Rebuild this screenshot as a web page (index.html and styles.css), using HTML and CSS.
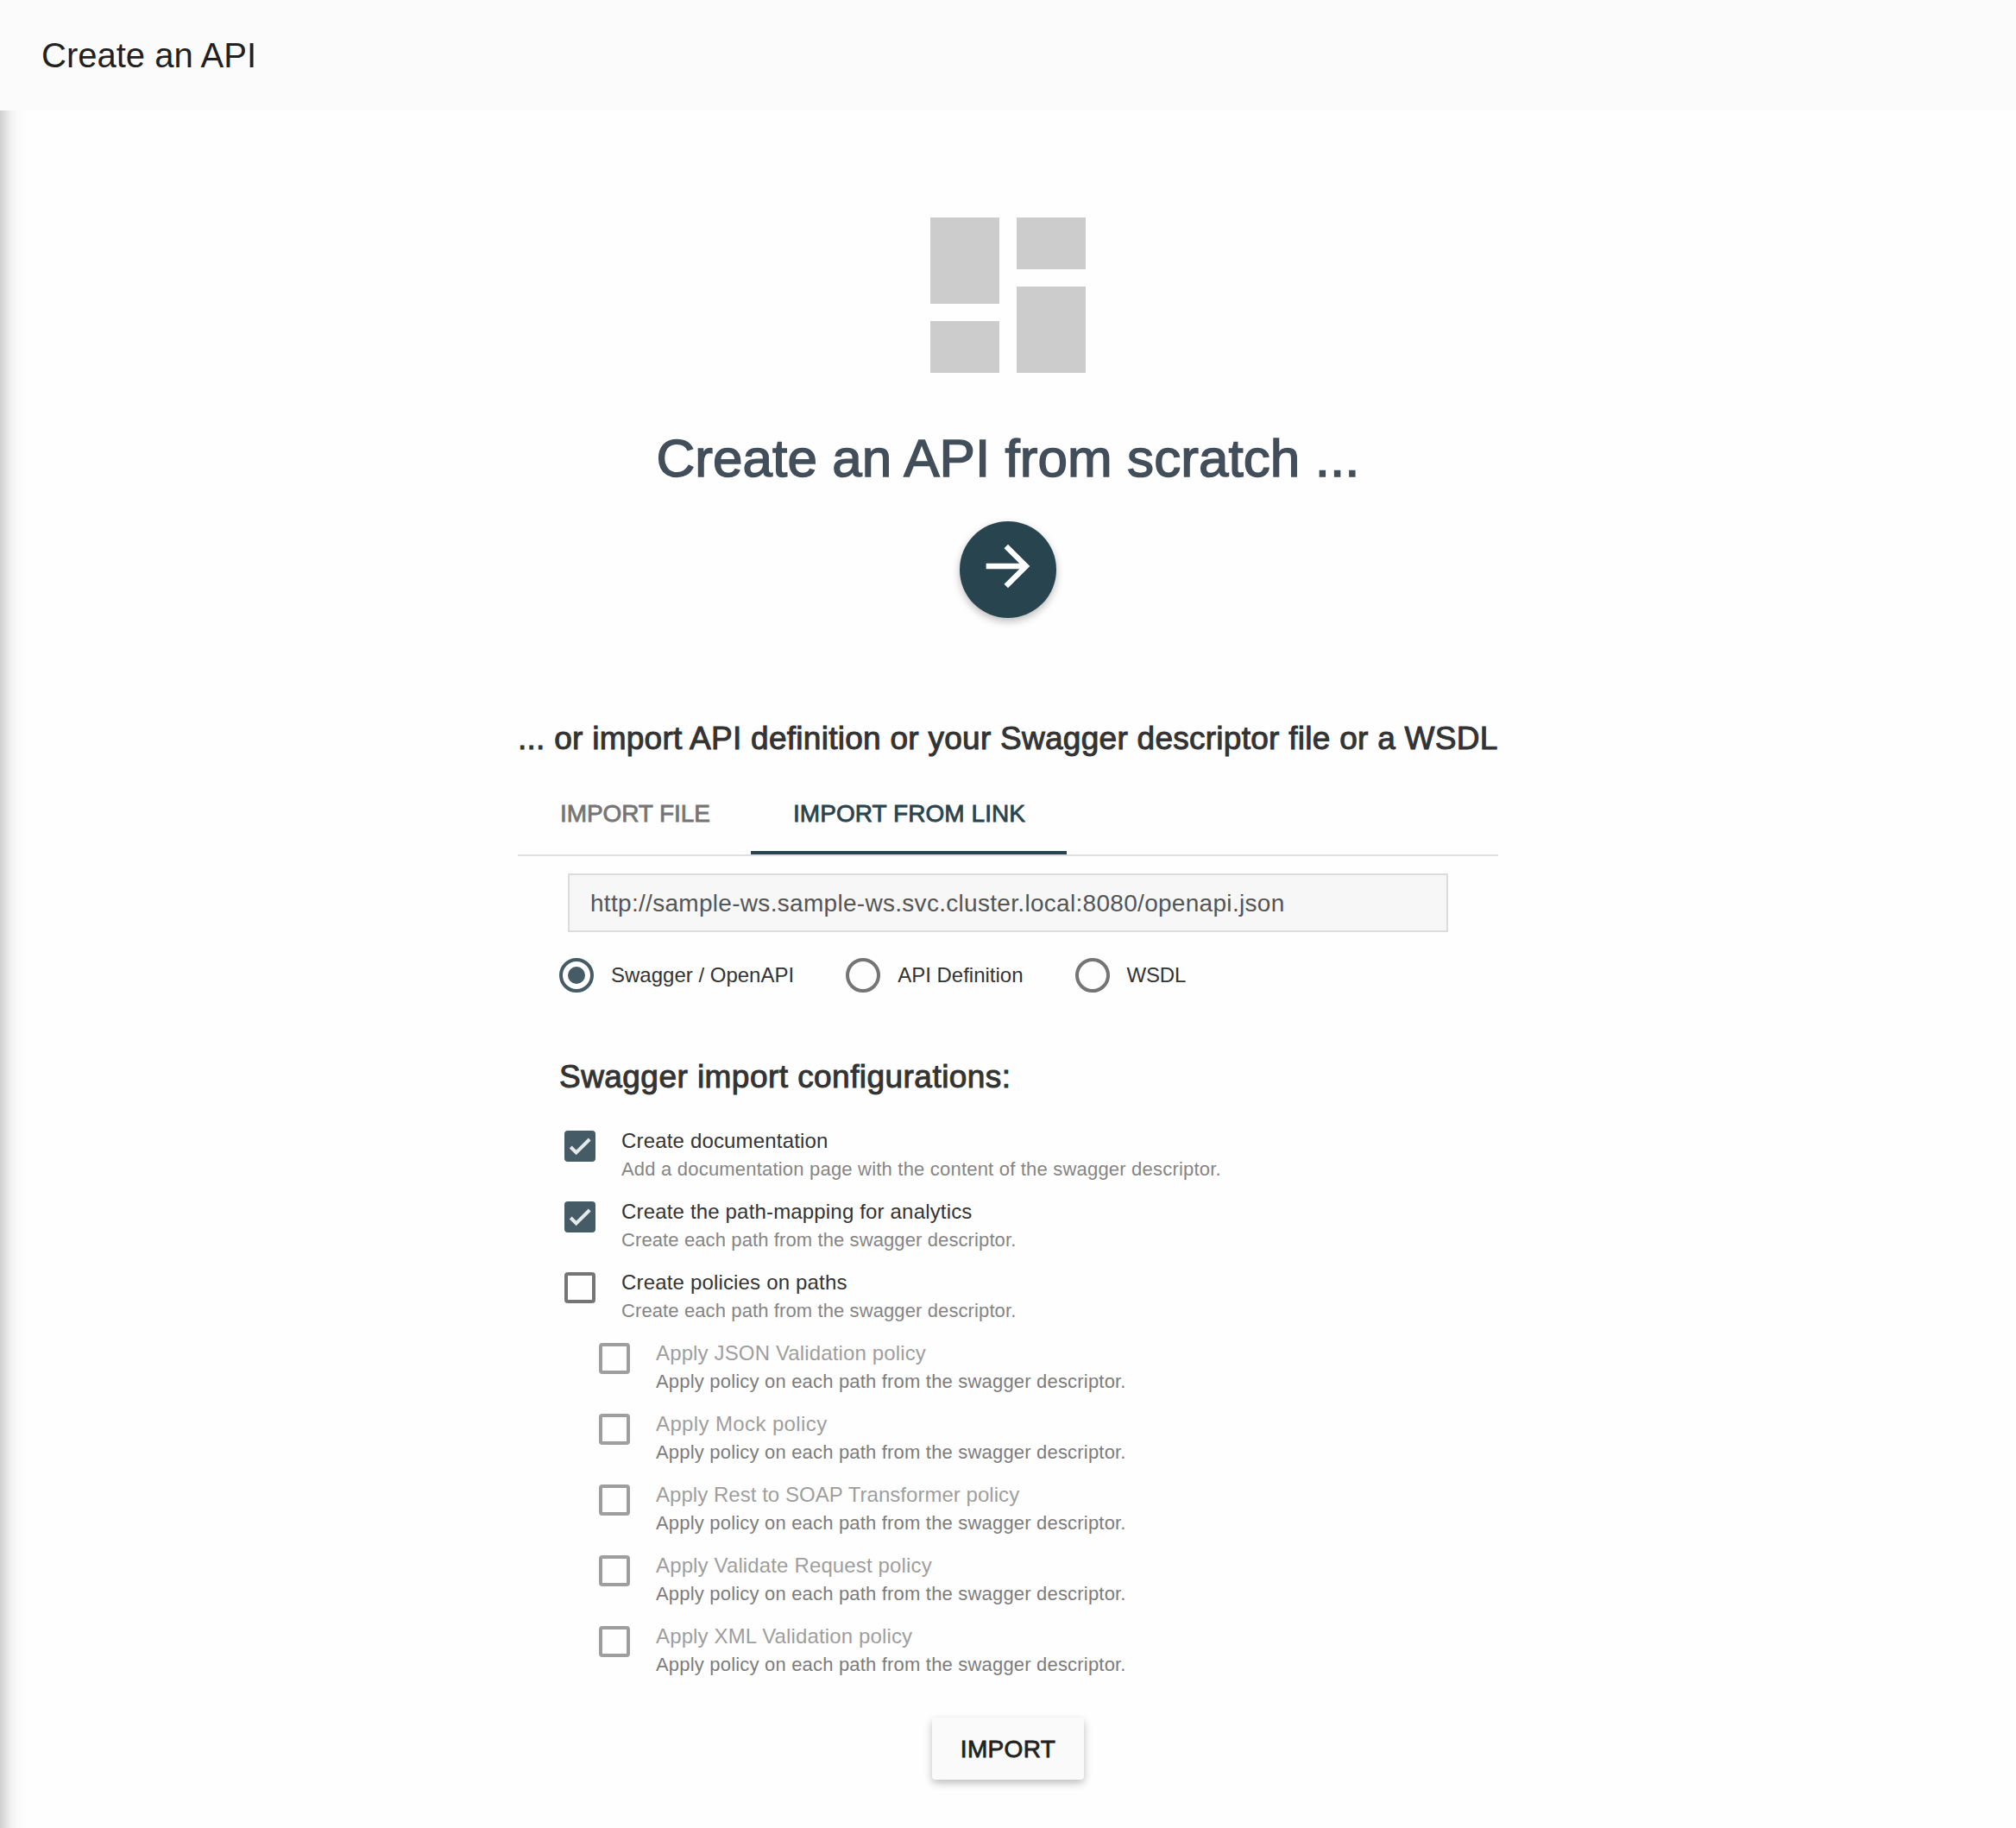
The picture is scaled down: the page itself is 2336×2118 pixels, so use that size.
FILE: index.html
```
<!DOCTYPE html>
<html lang="en">
<head>
<meta charset="utf-8">
<title>Create an API</title>
<link rel="stylesheet" href="styles.css">
</head>
<body>
<header class="toolbar"><h1 class="toolbar-title">Create an API</h1></header>
<main class="content">
  <svg class="dashboard-icon" viewBox="0 0 24 24"><path d="M3 13h8V3H3v10zm0 8h8v-6H3v6zm10 0h8V11h-8v10zm0-18v6h8V3h-8z"/></svg>
  <h2 class="scratch-title">Create an API from scratch ...</h2>
  <button class="fab" aria-label="Create"><svg class="fab-icon" viewBox="0 0 24 24"><path d="M12 4l-1.41 1.41L16.17 11H4v2h12.17l-5.58 5.59L12 20l8-8z"/></svg></button>
  <section class="import">
    <h3 class="import-title">... or import API definition or your Swagger descriptor file or a WSDL</h3>
    <nav class="tabs">
      <div class="tab tab-file">IMPORT FILE</div>
      <div class="tab tab-link active">IMPORT FROM LINK</div>
    </nav>
    <div class="url-field">http://sample-ws.sample-ws.svc.cluster.local:8080/openapi.json</div>
    <div class="radios">
      <div class="radio"><span class="radio-ring checked"></span><span>Swagger / OpenAPI</span></div>
      <div class="radio"><span class="radio-ring"></span><span>API Definition</span></div>
      <div class="radio"><span class="radio-ring"></span><span class="wsdl">WSDL</span></div>
    </div>
    <h3 class="config-title">Swagger import configurations:</h3>
    <div class="options">
      <div class="option"><span class="box checked"><svg class="tick" viewBox="0 0 36 36"><path d="M7.2 19 13.7 25.5 29.2 10"/></svg></span><div><div class="label">Create documentation</div><div class="desc">Add a documentation page with the content of the swagger descriptor.</div></div></div>
      <div class="option"><span class="box checked"><svg class="tick" viewBox="0 0 36 36"><path d="M7.2 19 13.7 25.5 29.2 10"/></svg></span><div><div class="label">Create the path-mapping for analytics</div><div class="desc short">Create each path from the swagger descriptor.</div></div></div>
      <div class="option"><span class="box"></span><div><div class="label">Create policies on paths</div><div class="desc short">Create each path from the swagger descriptor.</div></div></div>
      <div class="option disabled"><span class="box"></span><div><div class="label">Apply JSON Validation policy</div><div class="desc">Apply policy on each path from the swagger descriptor.</div></div></div>
      <div class="option disabled"><span class="box"></span><div><div class="label mock">Apply Mock policy</div><div class="desc">Apply policy on each path from the swagger descriptor.</div></div></div>
      <div class="option disabled"><span class="box"></span><div><div class="label soap">Apply Rest to SOAP Transformer policy</div><div class="desc">Apply policy on each path from the swagger descriptor.</div></div></div>
      <div class="option disabled"><span class="box"></span><div><div class="label">Apply Validate Request policy</div><div class="desc">Apply policy on each path from the swagger descriptor.</div></div></div>
      <div class="option disabled"><span class="box"></span><div><div class="label">Apply XML Validation policy</div><div class="desc">Apply policy on each path from the swagger descriptor.</div></div></div>
    </div>
  </section>
  <button class="import-button">IMPORT</button>
</main>
</body>
</html>
```
FILE: styles.css
```
* { box-sizing: border-box; }
body {
  margin: 0;
  background: #fefefe;
  color: #333;
  font-family: "Liberation Sans", Arial, sans-serif;
}
h1, h2, h3 { margin: 0; font-weight: 400; }
button { padding: 0; border: 0; font-family: inherit; }

.toolbar {
  display: flex;
  align-items: center;
  height: 128px;
  padding-left: 48px;
  background: #fbfbfb;
}
.toolbar-title {
  font-size: 40px;
  line-height: 46px;
  letter-spacing: 0;
  color: #212121;
}

.content {
  display: flex;
  flex-direction: column;
  align-items: center;
  height: 1990px;
  padding-top: 94px;
  background: linear-gradient(to right, #d0d0d0 0, #dadada 4px, #e8e8e8 9px, #f3f3f3 14px, #fafafa 20px, #fdfdfd 28px, #fefefe 36px);
}
.dashboard-icon { width: 240px; height: 240px; fill: #ccc; }
.scratch-title {
  margin-top: 33px;
  font-size: 62px;
  line-height: 72px;
  letter-spacing: 0.06px;
  color: #424e5a;
  -webkit-text-stroke: 1.5px #424e5a;
}
.fab {
  display: flex;
  justify-content: center;
  width: 112px;
  height: 112px;
  margin-top: 37px;
  padding: 14px 1px 0 0;
  border-radius: 50%;
  background: #28444f;
  box-shadow: 0 4px 10px rgba(0, 0, 0, 0.26);
}
.fab-icon { width: 76px; height: 76px; fill: #fff; }

.import { width: 1136px; margin-top: 118px; }
.import-title, .config-title {
  font-size: 37px;
  line-height: 43px;
  white-space: nowrap;
  -webkit-text-stroke: 1px #333;
}
.import-title { letter-spacing: 0.27px; }
.tabs {
  display: flex;
  height: 96px;
  margin-top: 19px;
  border-bottom: 2px solid #e0e0e0;
}
.tab {
  height: 94px;
  padding-left: 49px;
  font-size: 28px;
  line-height: 93px;
  color: #757575;
  -webkit-text-stroke: 0.8px currentColor;
}
.tab-file { width: 270px; letter-spacing: -0.08px; }
.tab-link { width: 366px; letter-spacing: 0.06px; }
.tab.active { color: #28444f; box-shadow: inset 0 -4px #28444f; }

.url-field {
  height: 68px;
  margin: 20px 58px 0;
  padding-left: 24px;
  border: 2px solid #dcdcdc;
  background: #f7f7f7;
  color: #555;
  font-size: 28px;
  line-height: 66px;
  letter-spacing: 0.3px;
}

.radios {
  display: flex;
  gap: 60px;
  margin: 30px 0 0 48px;
  font-size: 24px;
  line-height: 40px;
}
.radio { display: flex; gap: 20px; }
.wsdl { letter-spacing: -0.2px; }
.radio-ring {
  display: grid;
  place-items: center;
  width: 40px;
  height: 40px;
  border: 4px solid #757575;
  border-radius: 50%;
}
.radio-ring.checked { border-color: #455c66; }
.radio-ring.checked::after {
  content: "";
  width: 20px;
  height: 20px;
  border-radius: 50%;
  background: #455c66;
}

.config-title { margin: 76px 0 0 48px; letter-spacing: 0.45px; }
.options { margin: 36px 0 0 54px; }
.option { display: flex; gap: 30px; height: 82px; }
.option.disabled { margin-left: 40px; }
.box {
  width: 36px;
  height: 36px;
  margin-top: 5px;
  border: 4px solid #757575;
  border-radius: 4px;
}
.box.checked { border: 0; background: #455c66; }
.disabled .box { border-color: #9e9e9e; }
.tick {
  display: block;
  width: 36px;
  height: 36px;
  fill: none;
  stroke: #e6e9ea;
  stroke-width: 4;
}
.label {
  font-size: 24px;
  line-height: 33px;
  letter-spacing: 0.17px;
}
.disabled .label { color: #9e9e9e; letter-spacing: 0.14px; }
.disabled .mock { letter-spacing: 0.38px; }
.disabled .soap { letter-spacing: 0.04px; }
.desc {
  font-size: 22px;
  line-height: 33px;
  letter-spacing: 0.2px;
  color: #858585;
}
.desc.short { letter-spacing: 0.11px; }
.disabled .desc { letter-spacing: 0.19px; color: #7c7c7c; }

.import-button {
  width: 176px;
  height: 72px;
  margin-top: 29px;
  padding-top: 1px;
  border-radius: 4px;
  background: #fafafa;
  box-shadow: 0 4px 10px rgba(0, 0, 0, 0.26);
  color: #212121;
  font-size: 28px;
  letter-spacing: 0.34px;
  -webkit-text-stroke: 0.8px #212121;
}
```
